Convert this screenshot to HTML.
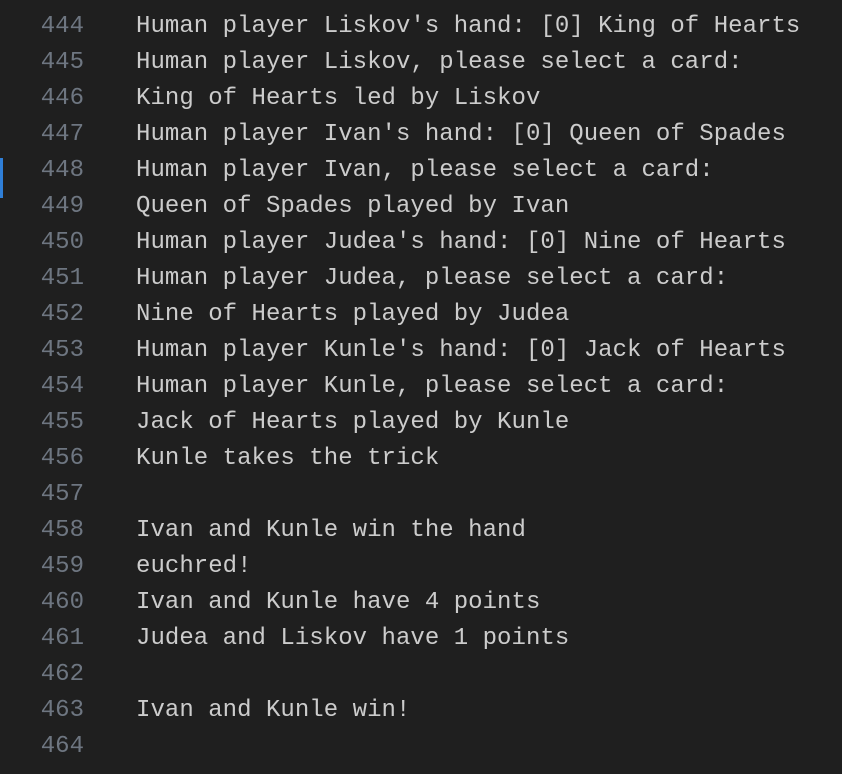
<!DOCTYPE html>
<html><head><meta charset="utf-8"><style>
html,body{margin:0;padding:0;background:#1f1f1f;width:842px;height:774px;overflow:hidden}
.ln{position:absolute;left:0;width:84px;text-align:right;color:#6e7681}
.tx{position:absolute;left:136px;color:#cccccc;white-space:pre;letter-spacing:0.04px}
.ln,.tx{font-family:"Liberation Mono",monospace;font-size:24px;line-height:36px;top:9px}
.bar{position:absolute;left:0;top:158px;width:3px;height:40px;background:#2f7fd8}
</style></head><body>
<div class="bar"></div>
<div class="ln">444<br>445<br>446<br>447<br>448<br>449<br>450<br>451<br>452<br>453<br>454<br>455<br>456<br>457<br>458<br>459<br>460<br>461<br>462<br>463<br>464</div>
<div class="tx">Human player Liskov's hand: [0] King of Hearts
Human player Liskov, please select a card:
King of Hearts led by Liskov
Human player Ivan's hand: [0] Queen of Spades
Human player Ivan, please select a card:
Queen of Spades played by Ivan
Human player Judea's hand: [0] Nine of Hearts
Human player Judea, please select a card:
Nine of Hearts played by Judea
Human player Kunle's hand: [0] Jack of Hearts
Human player Kunle, please select a card:
Jack of Hearts played by Kunle
Kunle takes the trick

Ivan and Kunle win the hand
euchred!
Ivan and Kunle have 4 points
Judea and Liskov have 1 points

Ivan and Kunle win!
</div>
</body></html>
